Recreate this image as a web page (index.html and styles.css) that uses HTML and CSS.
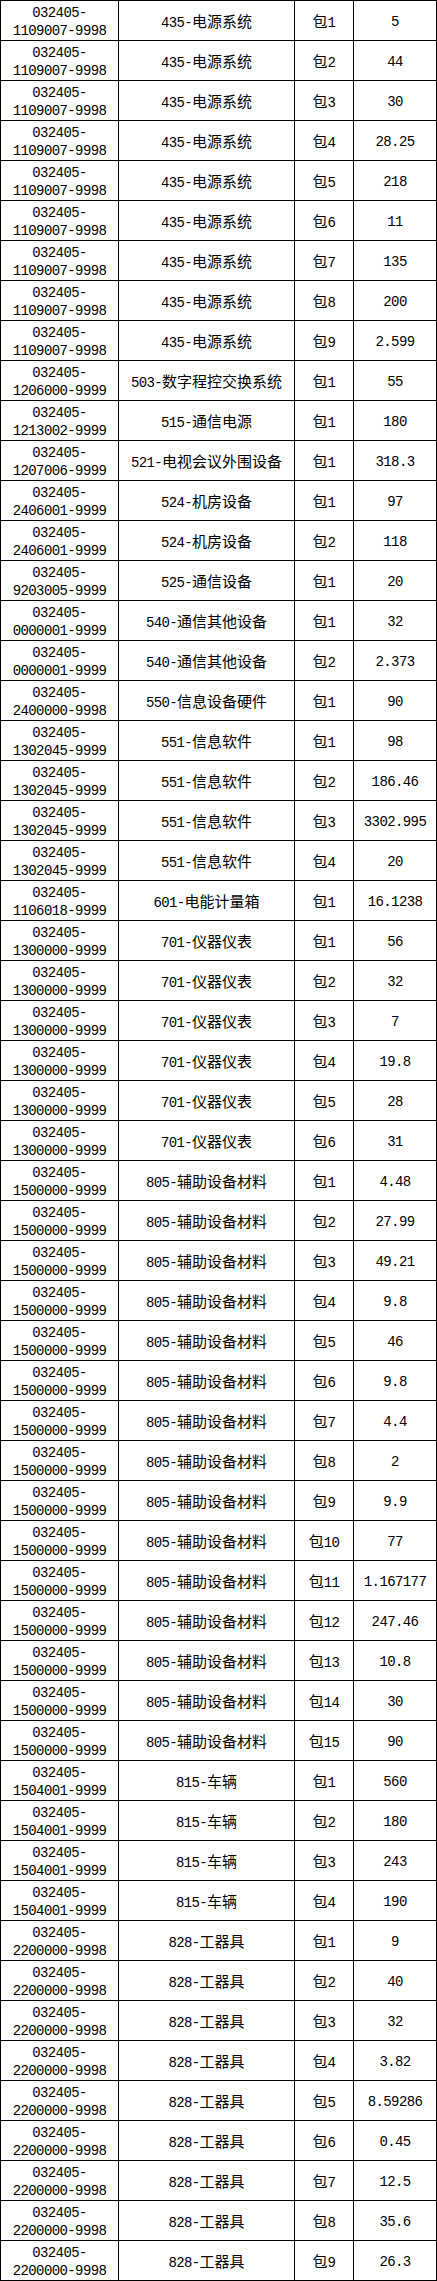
FILE: index.html
```html
<!DOCTYPE html>
<html lang="zh-CN">
<head>
<meta charset="utf-8">
<title>包件清单</title>
<link rel="stylesheet" href="styles.css">
</head>
<body>
<table class="grid">
<colgroup><col class="c-code"><col class="c-name"><col class="c-pkg"><col class="c-amt"></colgroup>
<tbody>
<tr><td class="code">032405-<br>1109007-9998</td><td>435-<span class="zh">电源系统</span></td><td><span class="zh">包</span>1</td><td>5</td></tr>
<tr><td class="code">032405-<br>1109007-9998</td><td>435-<span class="zh">电源系统</span></td><td><span class="zh">包</span>2</td><td>44</td></tr>
<tr><td class="code">032405-<br>1109007-9998</td><td>435-<span class="zh">电源系统</span></td><td><span class="zh">包</span>3</td><td>30</td></tr>
<tr><td class="code">032405-<br>1109007-9998</td><td>435-<span class="zh">电源系统</span></td><td><span class="zh">包</span>4</td><td>28.25</td></tr>
<tr><td class="code">032405-<br>1109007-9998</td><td>435-<span class="zh">电源系统</span></td><td><span class="zh">包</span>5</td><td>218</td></tr>
<tr><td class="code">032405-<br>1109007-9998</td><td>435-<span class="zh">电源系统</span></td><td><span class="zh">包</span>6</td><td>11</td></tr>
<tr><td class="code">032405-<br>1109007-9998</td><td>435-<span class="zh">电源系统</span></td><td><span class="zh">包</span>7</td><td>135</td></tr>
<tr><td class="code">032405-<br>1109007-9998</td><td>435-<span class="zh">电源系统</span></td><td><span class="zh">包</span>8</td><td>200</td></tr>
<tr><td class="code">032405-<br>1109007-9998</td><td>435-<span class="zh">电源系统</span></td><td><span class="zh">包</span>9</td><td>2.599</td></tr>
<tr><td class="code">032405-<br>1206000-9999</td><td>503-<span class="zh">数字程控交换系统</span></td><td><span class="zh">包</span>1</td><td>55</td></tr>
<tr><td class="code">032405-<br>1213002-9999</td><td>515-<span class="zh">通信电源</span></td><td><span class="zh">包</span>1</td><td>180</td></tr>
<tr><td class="code">032405-<br>1207006-9999</td><td>521-<span class="zh">电视会议外围设备</span></td><td><span class="zh">包</span>1</td><td>318.3</td></tr>
<tr><td class="code">032405-<br>2406001-9999</td><td>524-<span class="zh">机房设备</span></td><td><span class="zh">包</span>1</td><td>97</td></tr>
<tr><td class="code">032405-<br>2406001-9999</td><td>524-<span class="zh">机房设备</span></td><td><span class="zh">包</span>2</td><td>118</td></tr>
<tr><td class="code">032405-<br>9203005-9999</td><td>525-<span class="zh">通信设备</span></td><td><span class="zh">包</span>1</td><td>20</td></tr>
<tr><td class="code">032405-<br>0000001-9999</td><td>540-<span class="zh">通信其他设备</span></td><td><span class="zh">包</span>1</td><td>32</td></tr>
<tr><td class="code">032405-<br>0000001-9999</td><td>540-<span class="zh">通信其他设备</span></td><td><span class="zh">包</span>2</td><td>2.373</td></tr>
<tr><td class="code">032405-<br>2400000-9998</td><td>550-<span class="zh">信息设备硬件</span></td><td><span class="zh">包</span>1</td><td>90</td></tr>
<tr><td class="code">032405-<br>1302045-9999</td><td>551-<span class="zh">信息软件</span></td><td><span class="zh">包</span>1</td><td>98</td></tr>
<tr><td class="code">032405-<br>1302045-9999</td><td>551-<span class="zh">信息软件</span></td><td><span class="zh">包</span>2</td><td>186.46</td></tr>
<tr><td class="code">032405-<br>1302045-9999</td><td>551-<span class="zh">信息软件</span></td><td><span class="zh">包</span>3</td><td>3302.995</td></tr>
<tr><td class="code">032405-<br>1302045-9999</td><td>551-<span class="zh">信息软件</span></td><td><span class="zh">包</span>4</td><td>20</td></tr>
<tr><td class="code">032405-<br>1106018-9999</td><td>601-<span class="zh">电能计量箱</span></td><td><span class="zh">包</span>1</td><td>16.1238</td></tr>
<tr><td class="code">032405-<br>1300000-9999</td><td>701-<span class="zh">仪器仪表</span></td><td><span class="zh">包</span>1</td><td>56</td></tr>
<tr><td class="code">032405-<br>1300000-9999</td><td>701-<span class="zh">仪器仪表</span></td><td><span class="zh">包</span>2</td><td>32</td></tr>
<tr><td class="code">032405-<br>1300000-9999</td><td>701-<span class="zh">仪器仪表</span></td><td><span class="zh">包</span>3</td><td>7</td></tr>
<tr><td class="code">032405-<br>1300000-9999</td><td>701-<span class="zh">仪器仪表</span></td><td><span class="zh">包</span>4</td><td>19.8</td></tr>
<tr><td class="code">032405-<br>1300000-9999</td><td>701-<span class="zh">仪器仪表</span></td><td><span class="zh">包</span>5</td><td>28</td></tr>
<tr><td class="code">032405-<br>1300000-9999</td><td>701-<span class="zh">仪器仪表</span></td><td><span class="zh">包</span>6</td><td>31</td></tr>
<tr><td class="code">032405-<br>1500000-9999</td><td>805-<span class="zh">辅助设备材料</span></td><td><span class="zh">包</span>1</td><td>4.48</td></tr>
<tr><td class="code">032405-<br>1500000-9999</td><td>805-<span class="zh">辅助设备材料</span></td><td><span class="zh">包</span>2</td><td>27.99</td></tr>
<tr><td class="code">032405-<br>1500000-9999</td><td>805-<span class="zh">辅助设备材料</span></td><td><span class="zh">包</span>3</td><td>49.21</td></tr>
<tr><td class="code">032405-<br>1500000-9999</td><td>805-<span class="zh">辅助设备材料</span></td><td><span class="zh">包</span>4</td><td>9.8</td></tr>
<tr><td class="code">032405-<br>1500000-9999</td><td>805-<span class="zh">辅助设备材料</span></td><td><span class="zh">包</span>5</td><td>46</td></tr>
<tr><td class="code">032405-<br>1500000-9999</td><td>805-<span class="zh">辅助设备材料</span></td><td><span class="zh">包</span>6</td><td>9.8</td></tr>
<tr><td class="code">032405-<br>1500000-9999</td><td>805-<span class="zh">辅助设备材料</span></td><td><span class="zh">包</span>7</td><td>4.4</td></tr>
<tr><td class="code">032405-<br>1500000-9999</td><td>805-<span class="zh">辅助设备材料</span></td><td><span class="zh">包</span>8</td><td>2</td></tr>
<tr><td class="code">032405-<br>1500000-9999</td><td>805-<span class="zh">辅助设备材料</span></td><td><span class="zh">包</span>9</td><td>9.9</td></tr>
<tr><td class="code">032405-<br>1500000-9999</td><td>805-<span class="zh">辅助设备材料</span></td><td><span class="zh">包</span>10</td><td>77</td></tr>
<tr><td class="code">032405-<br>1500000-9999</td><td>805-<span class="zh">辅助设备材料</span></td><td><span class="zh">包</span>11</td><td>1.167177</td></tr>
<tr><td class="code">032405-<br>1500000-9999</td><td>805-<span class="zh">辅助设备材料</span></td><td><span class="zh">包</span>12</td><td>247.46</td></tr>
<tr><td class="code">032405-<br>1500000-9999</td><td>805-<span class="zh">辅助设备材料</span></td><td><span class="zh">包</span>13</td><td>10.8</td></tr>
<tr><td class="code">032405-<br>1500000-9999</td><td>805-<span class="zh">辅助设备材料</span></td><td><span class="zh">包</span>14</td><td>30</td></tr>
<tr><td class="code">032405-<br>1500000-9999</td><td>805-<span class="zh">辅助设备材料</span></td><td><span class="zh">包</span>15</td><td>90</td></tr>
<tr><td class="code">032405-<br>1504001-9999</td><td>815-<span class="zh">车辆</span></td><td><span class="zh">包</span>1</td><td>560</td></tr>
<tr><td class="code">032405-<br>1504001-9999</td><td>815-<span class="zh">车辆</span></td><td><span class="zh">包</span>2</td><td>180</td></tr>
<tr><td class="code">032405-<br>1504001-9999</td><td>815-<span class="zh">车辆</span></td><td><span class="zh">包</span>3</td><td>243</td></tr>
<tr><td class="code">032405-<br>1504001-9999</td><td>815-<span class="zh">车辆</span></td><td><span class="zh">包</span>4</td><td>190</td></tr>
<tr><td class="code">032405-<br>2200000-9998</td><td>828-<span class="zh">工器具</span></td><td><span class="zh">包</span>1</td><td>9</td></tr>
<tr><td class="code">032405-<br>2200000-9998</td><td>828-<span class="zh">工器具</span></td><td><span class="zh">包</span>2</td><td>40</td></tr>
<tr><td class="code">032405-<br>2200000-9998</td><td>828-<span class="zh">工器具</span></td><td><span class="zh">包</span>3</td><td>32</td></tr>
<tr><td class="code">032405-<br>2200000-9998</td><td>828-<span class="zh">工器具</span></td><td><span class="zh">包</span>4</td><td>3.82</td></tr>
<tr><td class="code">032405-<br>2200000-9998</td><td>828-<span class="zh">工器具</span></td><td><span class="zh">包</span>5</td><td>8.59286</td></tr>
<tr><td class="code">032405-<br>2200000-9998</td><td>828-<span class="zh">工器具</span></td><td><span class="zh">包</span>6</td><td>0.45</td></tr>
<tr><td class="code">032405-<br>2200000-9998</td><td>828-<span class="zh">工器具</span></td><td><span class="zh">包</span>7</td><td>12.5</td></tr>
<tr><td class="code">032405-<br>2200000-9998</td><td>828-<span class="zh">工器具</span></td><td><span class="zh">包</span>8</td><td>35.6</td></tr>
<tr><td class="code">032405-<br>2200000-9998</td><td>828-<span class="zh">工器具</span></td><td><span class="zh">包</span>9</td><td>26.3</td></tr>
</tbody>
</table>
</body>
</html>
```

FILE: styles.css
```css
html, body {
  margin: 0;
  padding: 0;
  background: #fff;
}

.grid {
  border-collapse: collapse;
  table-layout: fixed;
  width: 437px;
  color: #000;
  font-family: "Liberation Mono", "Noto Sans CJK SC", monospace;
  font-size: 14px;
  letter-spacing: -0.6px;
}

.c-code { width: 118px; }
.c-name { width: 176px; }
.c-pkg  { width: 59px; }
.c-amt  { width: 83px; }

.grid tr {
  height: 40px;
}

.grid td {
  border: 1px solid #000;
  padding: 2px 0 0;
  text-align: center;
  vertical-align: middle;
  line-height: 18px;
  white-space: nowrap;
}

.zh {
  font-family: "Noto Sans CJK SC", sans-serif;
  font-size: 15px;
  letter-spacing: 0;
}
```
